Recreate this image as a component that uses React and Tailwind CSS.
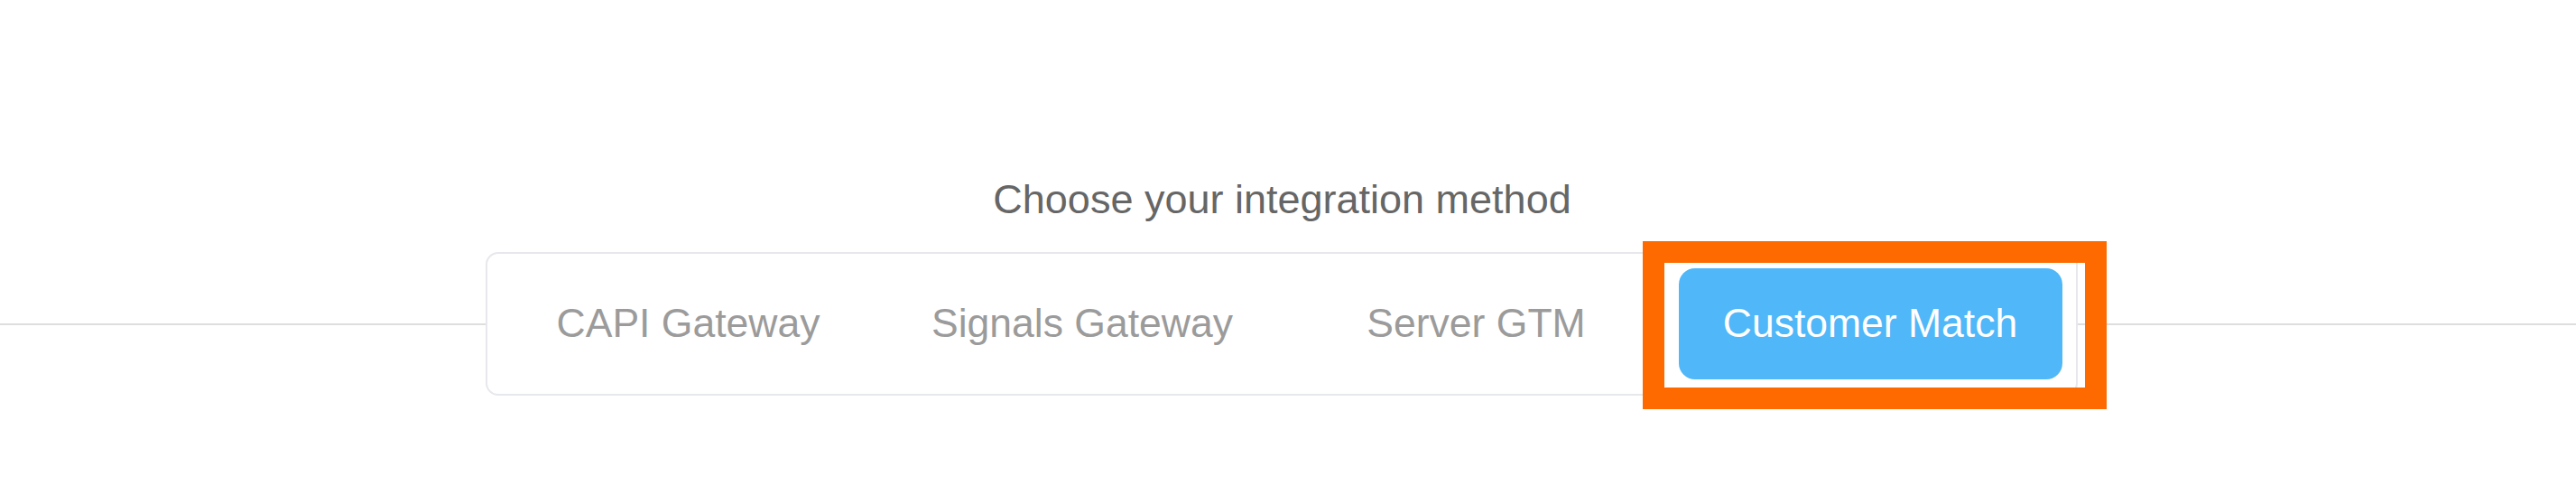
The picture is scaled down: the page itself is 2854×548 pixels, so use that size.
import React, { useState } from 'react';

const methods = ['CAPI Gateway', 'Signals Gateway', 'Server GTM', 'Customer Match'];

const App = () => {
  const [active, setActive] = useState('Customer Match');

  return (
    <div className="min-h-[548px] bg-white pt-[196px] font-['Liberation_Sans',Arial,sans-serif]">
      <h2 className="pr-[13px] text-center text-[45px] leading-[50px] font-normal text-[#666666]">
        Choose your integration method
      </h2>

      {/* Tab row with divider line */}
      <div className="mt-[33px] flex items-center">
        <div className="h-[2px] w-[538px] bg-[#dedede]" />
        <div className="flex gap-[11.5px] rounded-[14px] border-2 border-[#e6e8eb] bg-white py-[16px] pr-[15px] pl-[10px]">
          {methods.map((m) => (
            <button
              key={m}
              onClick={() => setActive(m)}
              className={`relative flex h-[123px] w-[425px] items-center justify-center rounded-[18px] text-[44.5px] ${
                active === m ? 'bg-[#50b7f8] text-white' : 'bg-white text-[#9b9b9b]'
              }`}
            >
              {m}
              {m === 'Customer Match' && (
                <span className="pointer-events-none absolute -top-[30px] -left-[40px] h-[186px] w-[514px] border-[24px] border-[#ff6a00]" />
              )}
            </button>
          ))}
        </div>
        <div className="h-[2px] flex-1 bg-[#dedede]" />
      </div>
    </div>
  );
};

export default App;
